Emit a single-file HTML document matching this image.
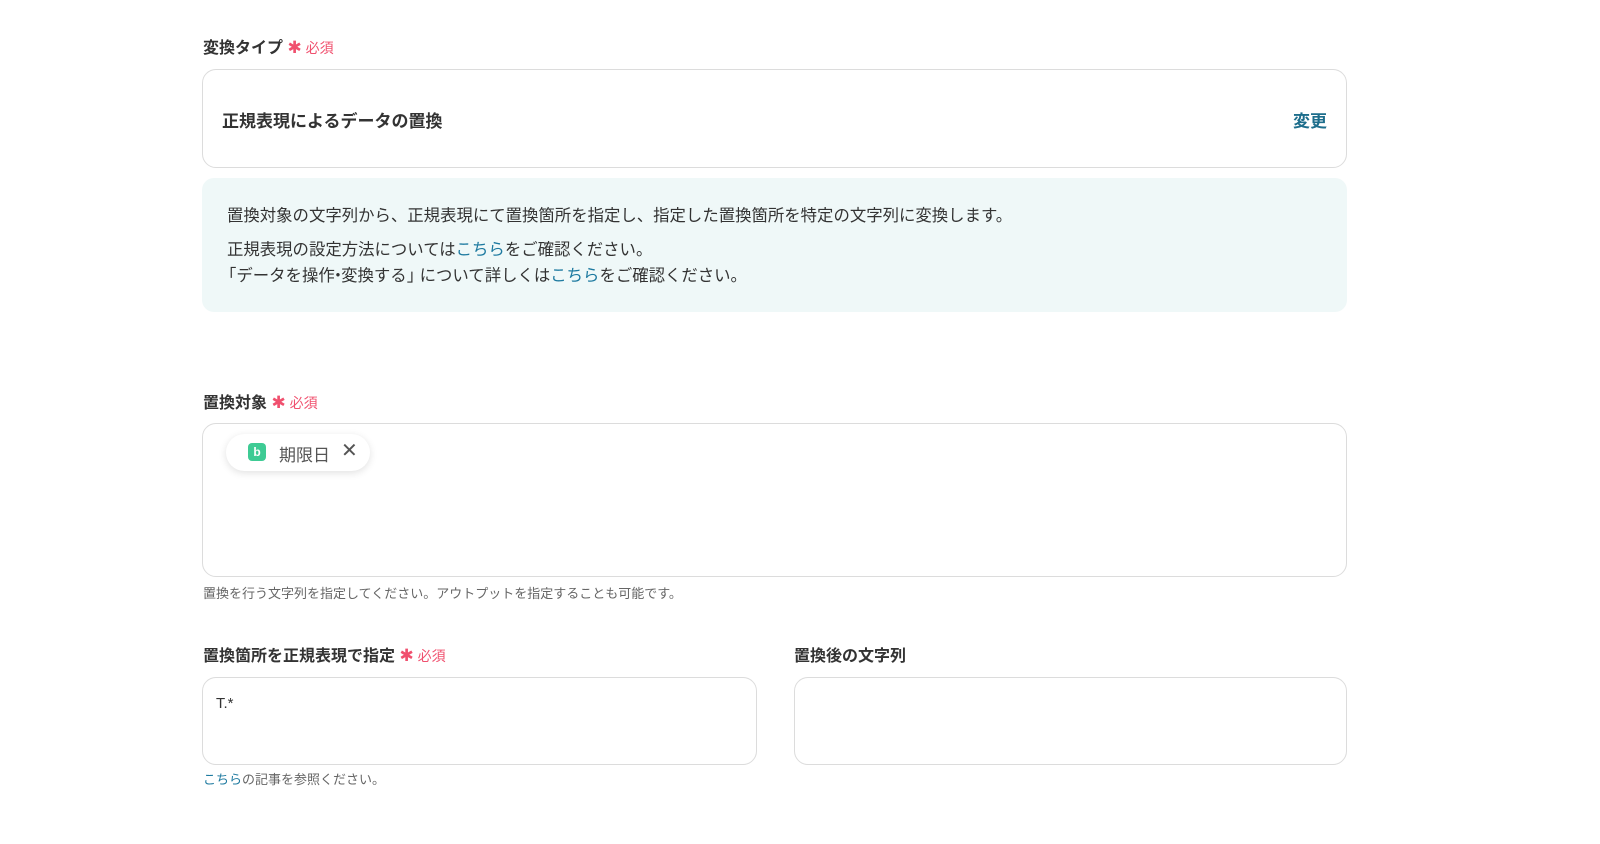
<!DOCTYPE html>
<html><head><meta charset="utf-8"><style>
body{margin:0;width:1600px;height:844px;background:#fff;font-family:"Liberation Sans","Noto Sans CJK JP",sans-serif;color:#2a2a2a;position:relative;overflow:hidden}
.a{position:absolute}
.lbl{font-size:16px;font-weight:bold;color:#333}
.req{color:#f0506e;font-size:14px;font-weight:normal}
.req b{font-size:17px;font-weight:normal}
.box{border:1px solid #dcdcdc;border-radius:14px;background:#fff;box-sizing:border-box}
.lnk{color:#1e7aa0}
</style></head><body>
<div class="a lbl" style="left:203px;top:34px">変換タイプ <span class="req"><b>✱</b> 必須</span></div>
<div class="a box" style="left:202px;top:69px;width:1145px;height:99px"></div>
<div class="a" style="left:222px;top:107px;font-size:17px;font-weight:bold;color:#333">正規表現によるデータの置換</div>
<div class="a" style="left:1293px;top:107px;font-size:17px;font-weight:bold;color:#1e6e8c">変更</div>
<div class="a" style="left:202px;top:178px;width:1145px;height:134px;background:#eff8f8;border-radius:12px"></div>
<div class="a" style="left:227px;top:203px;font-size:16.4px;line-height:26px;color:#333">置換対象の文字列から、正規表現にて置換箇所を指定し、指定した置換箇所を特定の文字列に変換します。</div>
<div class="a" style="left:227px;top:237px;font-size:16.4px;line-height:26px;color:#333">正規表現の設定方法については<span class="lnk">こちら</span>をご確認ください。<br><span style="margin-left:-7px">「</span>データを操作<span style="margin:0 -5px">・</span>変換する<span style="letter-spacing:-8px">」</span> について詳しくは<span class="lnk">こちら</span>をご確認ください。</div>
<div class="a lbl" style="left:203px;top:389px">置換対象 <span class="req"><b>✱</b> 必須</span></div>
<div class="a box" style="left:202px;top:423px;width:1145px;height:154px"></div>
<div class="a" style="left:226px;top:434px;width:144px;height:37px;border-radius:19px;background:#fff;box-shadow:0 2px 8px rgba(0,0,0,.12)"></div>
<div class="a" style="left:248px;top:443px;width:18px;height:18px;border-radius:4px;background:#3ecb94;color:#fff;font-size:12px;font-weight:bold;text-align:center;line-height:18px">b</div>
<div class="a" style="left:279px;top:441px;font-size:17px;color:#555">期限日</div>
<div class="a" style="left:341px;top:441px;font-size:20px;color:#555;line-height:20px">✕</div>
<div class="a" style="left:203px;top:583px;font-size:13px;color:#666">置換を行う文字列を指定してください。アウトプットを指定することも可能です。</div>
<div class="a lbl" style="left:203px;top:642px">置換箇所を正規表現で指定 <span class="req"><b>✱</b> 必須</span></div>
<div class="a lbl" style="left:794px;top:642px">置換後の文字列</div>
<div class="a box" style="left:202px;top:677px;width:555px;height:88px"></div>
<div class="a box" style="left:794px;top:677px;width:553px;height:88px"></div>
<div class="a" style="left:216px;top:695px;font-size:15px;color:#333">T.*</div>
<div class="a" style="left:203px;top:769px;font-size:13px;color:#666"><span class="lnk">こちら</span>の記事を参照ください。</div>
</body></html>
